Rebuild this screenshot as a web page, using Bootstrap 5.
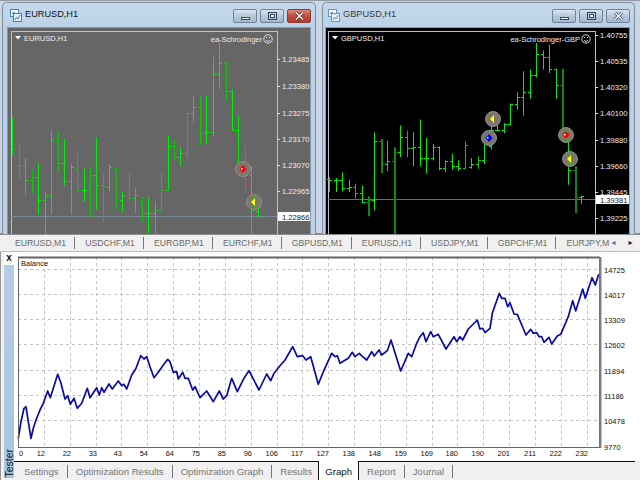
<!DOCTYPE html>
<html lang="en">
<head>
    <meta charset="UTF-8">
    <meta name="viewport" content="width=device-width, initial-scale=1.0">
    <title>Strategy Tester</title>
    <link rel="stylesheet" href="https://cdn.jsdelivr.net/npm/bootstrap@5.3.0/dist/css/bootstrap.min.css">
    <style>
        html, body { width: 640px; height: 480px; overflow: hidden; }
        body { background: #f0f0f0; font-family: "Liberation Sans", Arial, sans-serif; }
        svg { display: block; }
        svg text { font-family: "Liberation Sans", Arial, sans-serif; }

        /* chart windows */
        .mdi-area { height: 233px; background: #c9d6e3; padding: 1px 2px 0 2px; gap: 6px; border-top: 1px solid #8f9aa5; }
        .chart-win { height: 232px; padding: 0 4px; background: linear-gradient(#c6d9ea, #b9d1e8 24px); border: 1px solid #7f8d9b; border-bottom: 0; border-radius: 5px 5px 0 0; }
        .win-left { width: 314px; }
        .win-right { width: 313px; padding-left: 2px; }
        .win-head { height: 24px; }
        .win-icon { margin-left: 2px; }
        .win-title { font-size: 9.2px; color: #111; margin-left: 3px; }
        .win-right .win-title { color: #3a3a3a; }
        .win-buttons { gap: 3px; margin-top: 1px; }
        .win-btn { width: 24px; height: 14px; border: 1px solid #6f8298; border-radius: 2px; background: linear-gradient(#dbe6f1, #b6c8da 50%, #a5bace); }
        .win-btn.shut { background: linear-gradient(#dd8a7e, #c4493c 50%, #b23d32); border-color: #8a3a32; }
        .win-client { height: 207px; border: 1px solid #8b98a6; border-bottom: 0; overflow: hidden; }

        /* symbol tabs */
        .sym-bar { height: 18px; background: #f0f0f0; border-top: 2px solid #8c8c8c; }
        .sym-tabs { width: 604px; margin-left: 5px; overflow: hidden; white-space: nowrap; }
        .sym-tab { flex: none; font-size: 8.7px; color: #6a6a6a; padding: 0 8px 0 10px; line-height: 12px; border-right: 1px solid #777; }
        .sym-tab:last-child { border-right: 0; }
        .sym-arrow { font-size: 8px; width: 9px; text-align: center; font-family: "DejaVu Sans", sans-serif; }
        .sym-arrow.next { margin-left: 8px; }

        /* tester panel */
        .tester-body { height: 229px; background: #fff; border-top: 1px solid #bbb; }
        .tester-side { width: 14px; background: #f0f0f0; padding-left: 3px; border-left: 1px solid #999; }
        .side-close { height: 13px; font-size: 10px; font-weight: 700; line-height: 11px; background: #fff; text-align: center; color: #111; }
        .side-strip { flex: 1; background: linear-gradient(#b4cde9, #a9c5e2); margin-bottom: 2px; }
        .side-label { writing-mode: vertical-rl; transform: rotate(180deg); font-size: 10.5px; line-height: 10px; color: #111; }
        .tester-main { flex: 1; min-width: 0; }

        .bottom-tabs { height: 19px; background: #f0f0f0; }
        .tab-item { flex: none; font-size: 9.6px; color: #777; height: 19px; border-top: 1px solid #111; }
        .tab-item > span { display: block; padding: 0 8px; height: 13px; line-height: 13px; margin-top: 3px; border-right: 1px solid #777; }
        .tab-item.first > span { padding-left: 10px; }
        .tab-item.current { background: #fff; color: #111; border-top: 0; border-left: 1px solid #111; border-right: 1px solid #111; }
        .tab-item.current > span { border-right: 0; margin-top: 4px; padding: 0 6px; }
        .tab-item.no-sep > span { border-right: 0; padding-right: 6px; }
        .tab-rest { flex: 1; border-top: 1px solid #111; margin-right: 5px; }
    </style>
</head>
<body>

    <!-- chart windows -->
    <div class="mdi-area d-flex">
        <div class="chart-win win-left">
            <div class="win-head d-flex align-items-center">
                <svg class="win-icon" width="13" height="13" viewBox="0 0 13 13"><rect x="1.5" y="0.5" width="8" height="7" fill="#fff" stroke="#3f7fc8"/><rect x="4.5" y="4.5" width="8" height="8" fill="#e4f0fb" stroke="#3f7fc8"/><path d="M6 11l1.5-3 1.5 2 2-4M3 5l1.5-2 1.5 1" fill="none" stroke="#3f7fc8"/></svg>
                <span class="win-title">EURUSD,H1</span>
                <div class="win-buttons d-flex ms-auto">
                    <div class="win-btn"><svg width="22" height="12" viewBox="0 0 22 12"><rect x="7.5" y="7.5" width="8" height="2" fill="#fff" stroke="#33465a"/></svg></div>
                    <div class="win-btn"><svg width="22" height="12" viewBox="0 0 22 12"><rect x="7.5" y="2.5" width="8" height="7" fill="none" stroke="#33465a"/><rect x="9.5" y="4.5" width="4" height="3" fill="#fff" stroke="#33465a"/></svg></div>
                    <div class="win-btn shut"><svg width="22" height="12" viewBox="0 0 22 12"><path d="M8 2.5l7 7M15 2.5l-7 7" stroke="#4a2a2a" stroke-width="3"/><path d="M8 2.5l7 7M15 2.5l-7 7" stroke="#fff" stroke-width="1.5"/></svg></div>
                </div>
            </div>
            <div class="win-client"><svg id="chartLeft" width="304" height="207" viewBox="8 25 304 207"></svg></div>
        </div>
        <div class="chart-win win-right">
            <div class="win-head d-flex align-items-center">
                <svg class="win-icon" width="13" height="13" viewBox="0 0 13 13"><rect x="1.5" y="0.5" width="8" height="7" fill="#fff" stroke="#5b94d2"/><rect x="4.5" y="4.5" width="8" height="8" fill="#e4f0fb" stroke="#5b94d2"/><path d="M6 11l1.5-3 1.5 2 2-4M3 5l1.5-2 1.5 1" fill="none" stroke="#5b94d2"/></svg>
                <span class="win-title">GBPUSD,H1</span>
                <div class="win-buttons d-flex ms-auto">
                    <div class="win-btn"><svg width="22" height="12" viewBox="0 0 22 12"><rect x="7.5" y="7.5" width="8" height="2" fill="#fff" stroke="#33465a"/></svg></div>
                    <div class="win-btn"><svg width="22" height="12" viewBox="0 0 22 12"><rect x="7.5" y="2.5" width="8" height="7" fill="none" stroke="#33465a"/><rect x="9.5" y="4.5" width="4" height="3" fill="#fff" stroke="#33465a"/></svg></div>
                    <div class="win-btn"><svg width="22" height="12" viewBox="0 0 22 12"><path d="M8 2.5l7 7M15 2.5l-7 7" stroke="#33465a" stroke-width="3"/><path d="M8 2.5l7 7M15 2.5l-7 7" stroke="#fff" stroke-width="1.5"/></svg></div>
                </div>
            </div>
            <div class="win-client"><svg id="chartRight" width="303" height="207" viewBox="326 25 303 207"></svg></div>
        </div>
    </div>

    <!-- symbol tabs -->
    <div class="sym-bar d-flex align-items-center">
        <div class="sym-tabs d-flex">
            <div class="sym-tab">EURUSD,M1</div>
            <div class="sym-tab">USDCHF,M1</div>
            <div class="sym-tab">EURGBP,M1</div>
            <div class="sym-tab">EURCHF,M1</div>
            <div class="sym-tab">GBPUSD,M1</div>
            <div class="sym-tab">EURUSD,H1</div>
            <div class="sym-tab">USDJPY,M1</div>
            <div class="sym-tab">GBPCHF,M1</div>
            <div class="sym-tab">EURJPY,M1</div>
        </div>
        <div class="sym-arrow text-secondary">&#9666;</div>
        <div class="sym-arrow next">&#9656;</div>
    </div>

    <!-- tester panel -->
    <div class="tester-body d-flex">
        <div class="tester-side d-flex flex-column">
            <div class="side-close">x</div>
            <div class="side-strip d-flex align-items-end justify-content-center"><span class="side-label">Tester</span></div>
        </div>
        <div class="tester-main d-flex flex-column">
            <svg id="graph" width="626" height="209" viewBox="14 252 626 209"></svg>
            <div class="bottom-tabs d-flex">
                <div class="tab-item first"><span>Settings</span></div>
                <div class="tab-item"><span>Optimization Results</span></div>
                <div class="tab-item"><span>Optimization Graph</span></div>
                <div class="tab-item no-sep"><span>Results</span></div>
                <div class="tab-item current"><span>Graph</span></div>
                <div class="tab-item"><span>Report</span></div>
                <div class="tab-item"><span>Journal</span></div>
                <div class="tab-rest"></div>
            </div>
        </div>
    </div>

<script>
    // bars: x, high, low, open, close measured on a 3x crop of the window
    const leftBars = [
        [37,342,455,438,438],[57,420,530,487,487,1],[76,465,577,487,530],[96,500,572,530,522,1],[115,483,635,522,590],
        [134,565,695,592,580],[154,383,632,580,411],[173,385,507,411,481,1],[193,408,548,481,535],[212,483,635,535,492],
        [231,445,565,495,562,1],[251,497,597,562,560],[270,492,643,558,517,1],[289,403,620,517,547],[309,512,657,547,550,1],
        [328,483,565,552,493],[347,495,620,495,588,1],[367,565,628,590,575],[386,505,593,575,585,1],[406,555,630,585,575],
        [425,582,655,598,631,1],[445,582,690,631,630],[464,595,695,630,622],[483,505,622,622,562,1],[503,397,560,560,428],
        [522,408,470,428,462,1],[541,433,488,462,450],[561,330,465,450,330,1],[580,280,360,330,313],[600,280,427,313,390,1],
        [619,278,423,390,388],[638,162,400,388,212],[658,120,258,212,180],[677,175,293,180,265,1],[696,258,382,265,382],
        [715,338,505,382,500],[735,430,562,500,515,1],[754,490,695,515,620],[773,612,645,625,612]
    ];
    const rightBars = [
        [28,523,567,528,530],[47,525,567,530,530],[67,508,565,530,555],[86,530,567,555,553],[105,542,586,553,570,1],
        [125,548,600,570,598],[144,580,640,598,590,2],[163,388,622,590,415],[183,408,510,415,483,2],[202,413,505,483,475],
        [222,433,695,475,448,2],[241,367,462,448,403],[261,383,463,403,435,1],[280,387,490,435,433],[299,350,490,433,465],
        [319,405,512,465,465],[338,423,472,465,432],[357,430,502,432,495],[376,473,507,495,475],[396,452,500,475,490],
        [415,472,503,490,495],[435,415,497,495,425,1],[454,465,497,493,483],[474,460,497,483,470,1],[493,410,483,470,413],
        [512,360,440,430,380],[532,350,385,380,380],[551,360,390,380,362],[571,302,368,362,303],[590,268,320,303,282],
        [610,205,338,282,268],[630,200,287,268,215],[649,120,223,215,152],[668,142,200,152,162],[688,125,210,162,197],
        [707,197,287,197,245],[726,197,385,245,380,2],[745,375,545,380,502],[764,490,630,502,582,2],[784,578,602,582,578]
    ];
    const NS = "http://www.w3.org/2000/svg";

    function add(svg, tag, attrs, text) {
        const el = document.createElementNS(NS, tag);
        for (const k in attrs) el.setAttribute(k, attrs[k]);
        if (text) el.textContent = text;
        svg.appendChild(el);
        return el;
    }

    // marker circle: kind is "sell" (red), "buy" (blue) or "close" (yellow)
    function marker(svg, x, y, kind) {
        add(svg, "circle", { cx: x, cy: y, r: 7.5, fill: "#7d766b", stroke: "#8f8f8f", "stroke-width": 1 });
        add(svg, "rect", { x: x, y: y - 6, width: 1, height: 12, fill: "#13c513" });
        if (kind === "close") {
            add(svg, "path", { d: `M${x - 3} ${y}l4-4v8z`, fill: "#ffff00" });
        } else {
            const c = kind === "sell" ? "#ff0000" : "#0000ff";
            add(svg, "path", { d: `M${x - 3.5} ${y}l3.5-4 3.5 4-3.5 4z`, fill: c });
            add(svg, "rect", { x: x - 2, y: y - 1, width: 1.5, height: 1.5, fill: "#fff" });
        }
    }

    function drawChart(svg, o) {
        add(svg, "rect", { x: o.x0, y: 25, width: 320, height: 210, fill: o.bg });
        // chart frame
        add(svg, "rect", { x: o.left + .5, y: 28.5, width: o.right - o.left, height: 210, fill: "none", stroke: "#c0c0c0" });
        // last price line
        add(svg, "line", { x1: o.left, x2: o.right, y1: o.priceY + .5, y2: o.priceY + .5, stroke: o.lineColor });
        // order lines
        o.dashes.forEach(d => add(svg, "line", { x1: d[0], y1: d[1], x2: d[2], y2: d[3], stroke: d[4], "stroke-dasharray": "2 2" }));
        // bars
        o.bars.forEach(b => {
            const x = Math.round(o.x0 + b[0] / 3) + .5;
            const hi = b[1] / 3, lo = b[2] / 3, op = Math.round(b[3] / 3) + .5, cl = Math.round(b[4] / 3) + .5;
            const flag = b[5] || 0;
            const col = flag === 0 ? "#00ee00" : flag === 1 ? "#16c016" : "#0c8a0c";
            add(svg, "line", { x1: flag === 2 ? x + .5 : x, x2: flag === 2 ? x + .5 : x, y1: hi, y2: lo, stroke: col, "stroke-width": flag === 2 ? 2 : 1 });
            add(svg, "line", { x1: x - 2.5, x2: x, y1: op, y2: op, stroke: col });
            add(svg, "line", { x1: x, x2: x + 2.5, y1: cl, y2: cl, stroke: col });
        });
        o.markers.forEach(m => marker(svg, m[0], m[1], m[2]));
        // symbol caption and triangle
        add(svg, "path", { d: `M${o.left + 4} 33h6l-3 3.5z`, fill: "#fff" });
        add(svg, "text", { x: o.left + 13, y: 37.5, "font-size": 7.5, fill: "#eee" }, o.title);
        // expert name and smiley
        add(svg, "text", { x: o.right - 15, y: 38.5, "font-size": 7.5, fill: "#eee", "text-anchor": "end" }, o.expert);
        const sx = o.right - 9, sy = 36;
        add(svg, "circle", { cx: sx, cy: sy, r: 4.2, fill: "none", stroke: "#ddd" });
        add(svg, "rect", { x: sx - 2, y: sy - 2, width: 1, height: 1, fill: "#ddd" });
        add(svg, "rect", { x: sx + 1, y: sy - 2, width: 1, height: 1, fill: "#ddd" });
        add(svg, "path", { d: `M${sx - 2} ${sy + 1.5}q2 2 4 0`, fill: "none", stroke: "#ddd" });
        // price scale
        add(svg, "rect", { x: o.right + 1, y: 25, width: 40, height: 210, fill: o.bg });
        o.scale.forEach(s => {
            add(svg, "line", { x1: o.right, x2: o.right + 3, y1: s[1] - 3 + .5, y2: s[1] - 3 + .5, stroke: "#ddd" });
            add(svg, "text", { x: o.right + 5, y: s[1], "font-size": 7.6, fill: "#eee" }, s[0]);
        });
        add(svg, "rect", { x: o.right + 1, y: o.priceY - 4, width: 34, height: 9, fill: "#fff" });
        add(svg, "text", { x: o.right + 5, y: o.priceY + 3.5, "font-size": 7.6, fill: "#222" }, o.price);
    }

    drawChart(document.getElementById("chartLeft"), {
        x0: 0, left: 11, right: 277, bg: "#666666", lineColor: "#7d8a98", bars: leftBars, priceY: 213,
        title: "EURUSD,H1", expert: "ea-Schrodinger", price: "1.22866",
        scale: [["1.23485",59],["1.23380",86],["1.23275",113],["1.23170",139],["1.23070",165],["1.22965",191]],
        markers: [[243,166,"sell"],[254,199,"close"]],
        dashes: [[246,170,251,195,"#ff2020"]]
    });

    drawChart(document.getElementById("chartRight"), {
        x0: 320, left: 328, right: 595, bg: "#000000", lineColor: "#666e76", bars: rightBars, priceY: 196,
        title: "GBPUSD,H1", expert: "ea-Schrodinger-GBP", price: "1.39381",
        scale: [["1.40755",35],["1.40535",61],["1.40320",87],["1.40100",113],["1.39880",140],["1.39660",166],["1.39445",192],["1.39225",218]],
        markers: [[493,116,"close"],[489,135,"buy"],[566,132,"sell"],[570,156,"close"]],
        dashes: [[491,122,490,130,"#2040ff"],[568,138,569,151,"#ff2020"]]
    });

    // balance curve, points read from the picture
    const balance = [
        [18.3,438.3],[20.7,423.3],[24,408.3],[26,406.7],[28.3,421.7],[31,438.3],[33.3,428.3],[36,420],[40,410],[43.3,403.3],
        [47.7,391],[50.3,397.7],[53.3,388.3],[57.7,374.3],[61,383.3],[65,399],[67.7,395.7],[70.3,404.3],[74,398.3],[77.3,408.3],
        [81.7,403.3],[87.3,388.3],[90,397.7],[96.7,387.7],[99.3,395],[101.7,387.7],[104,392.3],[109,384],[112.3,389],[118.3,381],
        [121.7,385.7],[124,384.3],[126.7,389],[131.7,375],[135.7,369],[140.7,355.7],[144,359],[146.7,356.7],[150,366.7],[154,377.7],
        [158.3,372.3],[163.3,365],[167.7,359.3],[170,361.7],[173.3,372.3],[176.7,371.7],[178.3,379],[182.7,372.3],[185,378.3],[188.3,378.3],
        [192.7,390],[195,386.7],[200,397.7],[206.7,391],[213.3,401.7],[219.3,391],[223.3,399],[226.7,395.7],[231.7,378.3],[237.3,391.7],
        [244.3,377.7],[249,370.7],[259,390],[266.7,374],[270.7,380.7],[274,373.3],[280,365.7],[285,360],[292.7,346.7],[297.3,356.7],
        [302.7,355.7],[306,360],[310.7,356.7],[318.3,384.3],[323.3,371.7],[331.7,353.3],[335,356.7],[337.3,355.7],[340,363.3],[348.3,358.3],
        [352.3,352.3],[355,356.7],[359.3,353.3],[362.7,356.7],[366.7,360],[371.7,351.7],[374.3,356],[379,350],[381.7,355],[387.3,350.7],
        [391,340],[400.7,371],[408.3,353.3],[411.7,356.7],[416.7,343.3],[420,336.7],[423.3,332.7],[426,341.7],[430.7,331.7],[433.3,336.7],
        [438.3,334.3],[446,349],[454,336.7],[456.7,341.7],[460,336.7],[462.7,340],[468.3,329],[477.3,320],[480,329],[482.7,328.3],
        [485,332.7],[490,328.3],[492.3,313.3],[499.3,293.3],[501.7,298.3],[505,298.3],[507.7,306.7],[510,302.7],[514,314],[517.3,314.3],
        [526,335],[530.7,329.3],[533.3,333.3],[536.7,332.7],[539,336.7],[541.7,336.7],[544,342.3],[549,337.3],[551.7,344],[557.3,336],
        [560.7,334.3],[568.3,316.7],[572.7,300.7],[575.7,311],[582.7,289],[585.3,298.3],[592,277.7],[595.3,285],[598.7,274.3]
    ];

    const graph = document.getElementById("graph");
    const xLabels = ["12","22","33","43","54","64","75","85","96","106","117","127","138","148","159","169","180","190","201","211","222","232"];
    add(graph, "rect", { x: 14, y: 252, width: 626, height: 209, fill: "#fff" });
    xLabels.forEach((label, i) => {
        const x = Math.round(18 + (i + 1) * 25.85);
        add(graph, "line", { x1: x + .5, x2: x + .5, y1: 257, y2: 449, stroke: "#c4c4c4", "stroke-dasharray": "3 3" });
        add(graph, "text", { x: x + 1, y: 456, "font-size": 7.5, fill: "#111", "text-anchor": "end" }, label);
    });
    add(graph, "text", { x: 19, y: 456, "font-size": 7.5, fill: "#111" }, "0");
    [["14725",270],["14017",295],["13309",320],["12602",345],["11894",371],["11186",396],["10478",421],["9770",447]].forEach(r => {
        if (r[0] !== "9770") add(graph, "line", { x1: 18, x2: 600, y1: r[1] - .5, y2: r[1] - .5, stroke: "#c4c4c4", "stroke-dasharray": "3 3" });
        add(graph, "text", { x: 604, y: r[1] + 3, "font-size": 7.5, fill: "#111" }, r[0]);
    });
    add(graph, "text", { x: 21, y: 266, "font-size": 7.5, fill: "#111" }, "Balance");

    add(graph, "polyline", {
        points: balance.map(p => p.join(",")).join(" "),
        fill: "none", stroke: "#0a0aa8", "stroke-width": 1.7, "stroke-linejoin": "round"
    });
    add(graph, "rect", { x: 18.5, y: 257.5, width: 581, height: 190, fill: "none", stroke: "#666" });
    add(graph, "line", { x1: 18, x2: 600, y1: 257.5, y2: 257.5, stroke: "#666", "stroke-width": 2 });
    add(graph, "line", { x1: 600.5, x2: 600.5, y1: 257, y2: 448, stroke: "#808080", "stroke-width": 2 });
</script>
</body>
</html>
